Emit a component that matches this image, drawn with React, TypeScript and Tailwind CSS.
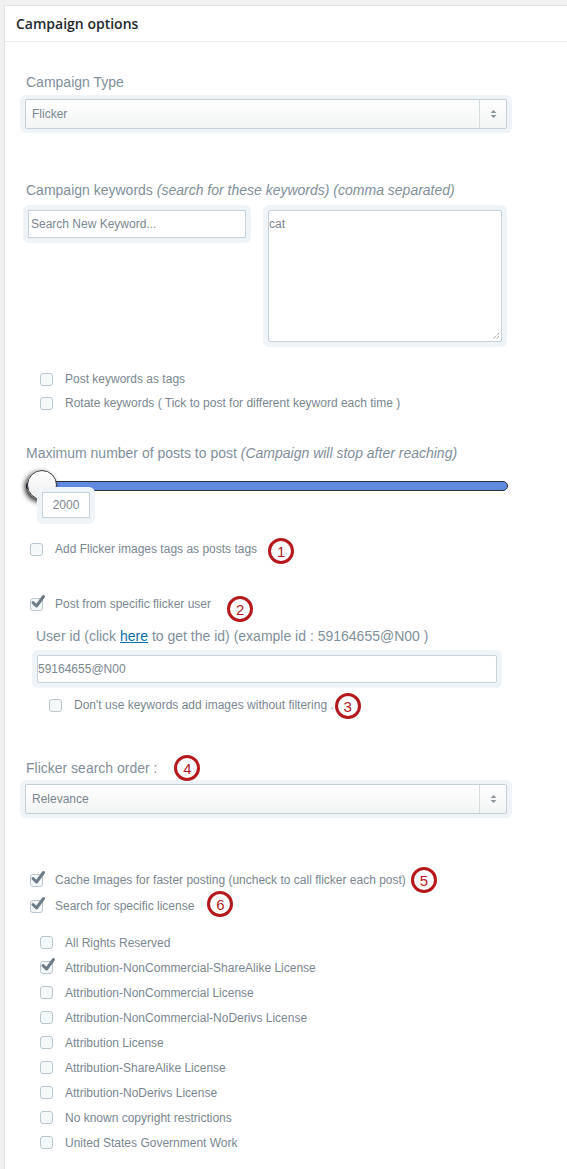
const labelCls = 'text-[14px] leading-4 text-[#7f8f9b]'
const optCls = 'text-[12px] text-[#7a8791]'

function Badge({ n, className = '' }: { n: number; className?: string }) {
  return (
    <span className={`relative w-[26px] h-[26px] shrink-0 rounded-full border-[3px] border-[#b5191d] bg-white flex items-center justify-center text-[15px] leading-none text-[#b5191d] ${className}`}>
      {n}
    </span>
  )
}

function Check({ checked }: { checked?: boolean }) {
  return (
    <span className="relative w-[13px] h-[13px] shrink-0 rounded-[3px] border border-[#b9c7cf] bg-[#f5f8f9]">
      {checked && (
        <svg className="absolute -top-[5px] -left-[1px]" width="16" height="16" viewBox="0 0 16 16">
          <path d="M3 8.5 L6.5 12 L13.5 2.5" fill="none" stroke="#6d7b86" strokeWidth="3" strokeLinecap="round" strokeLinejoin="round" />
        </svg>
      )}
    </span>
  )
}

function Option({ label, checked, pad, h = 'h-[24px]' }: { label: string; checked?: boolean; pad: string; h?: string }) {
  return (
    <div className={`flex items-center gap-[12px] ${h} ${pad}`}>
      <Check checked={checked} />
      <span className={optCls}>{label}</span>
    </div>
  )
}

function Select({ value }: { value: string }) {
  return (
    <div className="w-[492px] rounded-[6px] bg-[#eef4f7] px-[5px] py-[4px]">
      <div className="h-[30px] flex border border-[#c5d0d6] rounded-[2px] bg-gradient-to-b from-white to-[#f3f4f4]">
        <span className="flex-1 flex items-center pl-[6px] text-[12px] text-[#7a8791]">{value}</span>
        <span className="w-[27px] border-l border-[#d6dde1] flex items-center justify-center">
          <svg width="7" height="10" viewBox="0 0 7 10">
            <path d="M3.5 1 L6.5 4 L0.5 4 Z M3.5 9 L6.5 6 L0.5 6 Z" fill="#8a969e" />
          </svg>
        </span>
      </div>
    </div>
  )
}

const licenses = [
  'All Rights Reserved',
  'Attribution-NonCommercial-ShareAlike License',
  'Attribution-NonCommercial License',
  'Attribution-NonCommercial-NoDerivs License',
  'Attribution License',
  'Attribution-ShareAlike License',
  'Attribution-NoDerivs License',
  'No known copyright restrictions',
  'United States Government Work',
]

export default function App() {
  return (
    <div className="min-h-[1169px] bg-[#f1f1f1] pt-[5px]" style={{ fontFamily: '"Liberation Sans", Arial, sans-serif' }}>
      <div className="ml-[4px] bg-white border-l border-t border-[#e3e3e3] pb-[20px]">
        <div className="h-[36px] flex items-center pl-[11px] border-b border-[#ececec]">
          <h2 className="text-[14px] font-semibold text-[#23282d]" style={{ fontFamily: '"Open Sans", sans-serif' }}>
            Campaign options
          </h2>
        </div>

        <div className="pl-[15px]">
          {/* Campaign type */}
          <div className={`mt-[32px] ml-[6px] ${labelCls}`}>Campaign Type</div>
          <div className="mt-[5px]">
            <Select value="Flicker" />
          </div>

          {/* Keywords */}
          <div className={`mt-[49px] ml-[6px] ${labelCls}`}>
            Campaign keywords <i>(search for these keywords) (comma separated)</i>
          </div>
          <div className="mt-[7px] ml-[3px] flex items-start gap-[12px]">
            <div className="w-[228px] rounded-[6px] bg-[#eef4f7] p-[5px]">
              <div className="h-[28px] border border-[#c6d3da] bg-white flex items-center pl-[2px] text-[12px] text-[#7a8791]">
                Search New Keyword...
              </div>
            </div>
            <div className="w-[244px] h-[142px] rounded-[6px] bg-[#eef4f7] p-[5px]">
              <div className="relative h-full border border-[#c6d3da] rounded-[2px] bg-white pt-[5px] text-[12px] leading-4 text-[#7a8791]">
                cat
                <svg className="absolute right-[1px] bottom-[1px]" width="8" height="8" viewBox="0 0 8 8">
                  <path d="M7 1 L1 7 M7 4 L4 7" stroke="#777" strokeWidth="1" strokeDasharray="1 1" />
                </svg>
              </div>
            </div>
          </div>

          <div className="mt-[20px]">
            <Option pad="pl-[20px]" label="Post keywords as tags" />
            <Option pad="pl-[20px]" label="Rotate keywords ( Tick to post for different keyword each time )" />
          </div>

          {/* Max posts */}
          <div className={`mt-[30px] ml-[6px] ${labelCls}`}>
            Maximum number of posts to post <i>(Campaign will stop after reaching)</i>
          </div>
          <div className="relative mt-[9px] h-[54px] ml-[6px] w-[482px] pt-[11px]">
            <div className="h-[10px] rounded-full border border-[#2c2f36] bg-[#5f8ae0]" />
            <div className="absolute left-[1px] top-0 w-[30px] h-[30px] rounded-full border border-[#3a3a3a] bg-gradient-to-b from-white to-[#ececec] shadow-[-2px_2px_5px_rgba(0,0,0,0.85)]" />
            <div className="absolute left-[11px] top-[17px] w-[58px] h-[37px] rounded-[6px] bg-[#eef4f7] px-[5px] py-[5px]">
              <div className="h-[26px] border border-[#c6d3da] bg-white flex items-center justify-center text-[12px] text-[#7a8791]">
                2000
              </div>
            </div>
          </div>

          <div className="mt-[13px] h-[24px] flex items-center">
            <Option pad="pl-[10px]" label="Add Flicker images tags as posts tags" />
            <Badge n={1} className="ml-[11px] top-[2px]" />
          </div>

          {/* Specific user */}
          <div className="mt-[31px] h-[24px] flex items-center">
            <Option pad="pl-[10px]" checked label="Post from specific flicker user" />
            <Badge n={2} className="ml-[16px] top-[5px]" />
          </div>
          <div className={`mt-[12px] ml-[16px] ${labelCls}`}>
            User id (click <a href="#" className="text-[#0a6ea8] underline">here</a> to get the id) (example id : 59164655@N00 )
          </div>
          <div className="mt-[6px] ml-[12px] w-[470px] rounded-[6px] bg-[#eef4f7] p-[5px]">
            <div className="h-[28px] border border-[#c6d3da] rounded-[2px] bg-white flex items-center text-[12px] text-[#7a8791]">
              59164655@N00
            </div>
          </div>
          <div className="mt-[5px] h-[24px] flex items-center">
            <Option pad="pl-[29px]" label="Don't use keywords add images without filtering ." />
            <Badge n={3} className="ml-[1px] top-[1px]" />
          </div>

          {/* Search order */}
          <div className="mt-[43px] ml-[6px] h-[16px] flex items-center">
            <span className={labelCls}>Flicker search order :</span>
            <Badge n={4} className="ml-[17px]" />
          </div>
          <div className="mt-[4px]">
            <Select value="Relevance" />
          </div>

          {/* Cache + license */}
          <div className="mt-[49px]">
            <div className="h-[26px] flex items-center">
              <Option pad="pl-[10px]" h="h-[26px]" checked label="Cache Images for faster posting (uncheck to call flicker each post)" />
              <Badge n={5} className="ml-[5px]" />
            </div>
            <div className="h-[26px] flex items-center">
              <Option pad="pl-[10px]" h="h-[26px]" checked label="Search for specific license" />
              <Badge n={6} className="ml-[13px] -top-[2px]" />
            </div>
          </div>

          <div className="mt-[11px]">
            {licenses.map((l, i) => (
              <Option key={l} pad="pl-[20px]" h="h-[25px]" checked={i === 1} label={l} />
            ))}
          </div>
        </div>
      </div>
    </div>
  )
}
